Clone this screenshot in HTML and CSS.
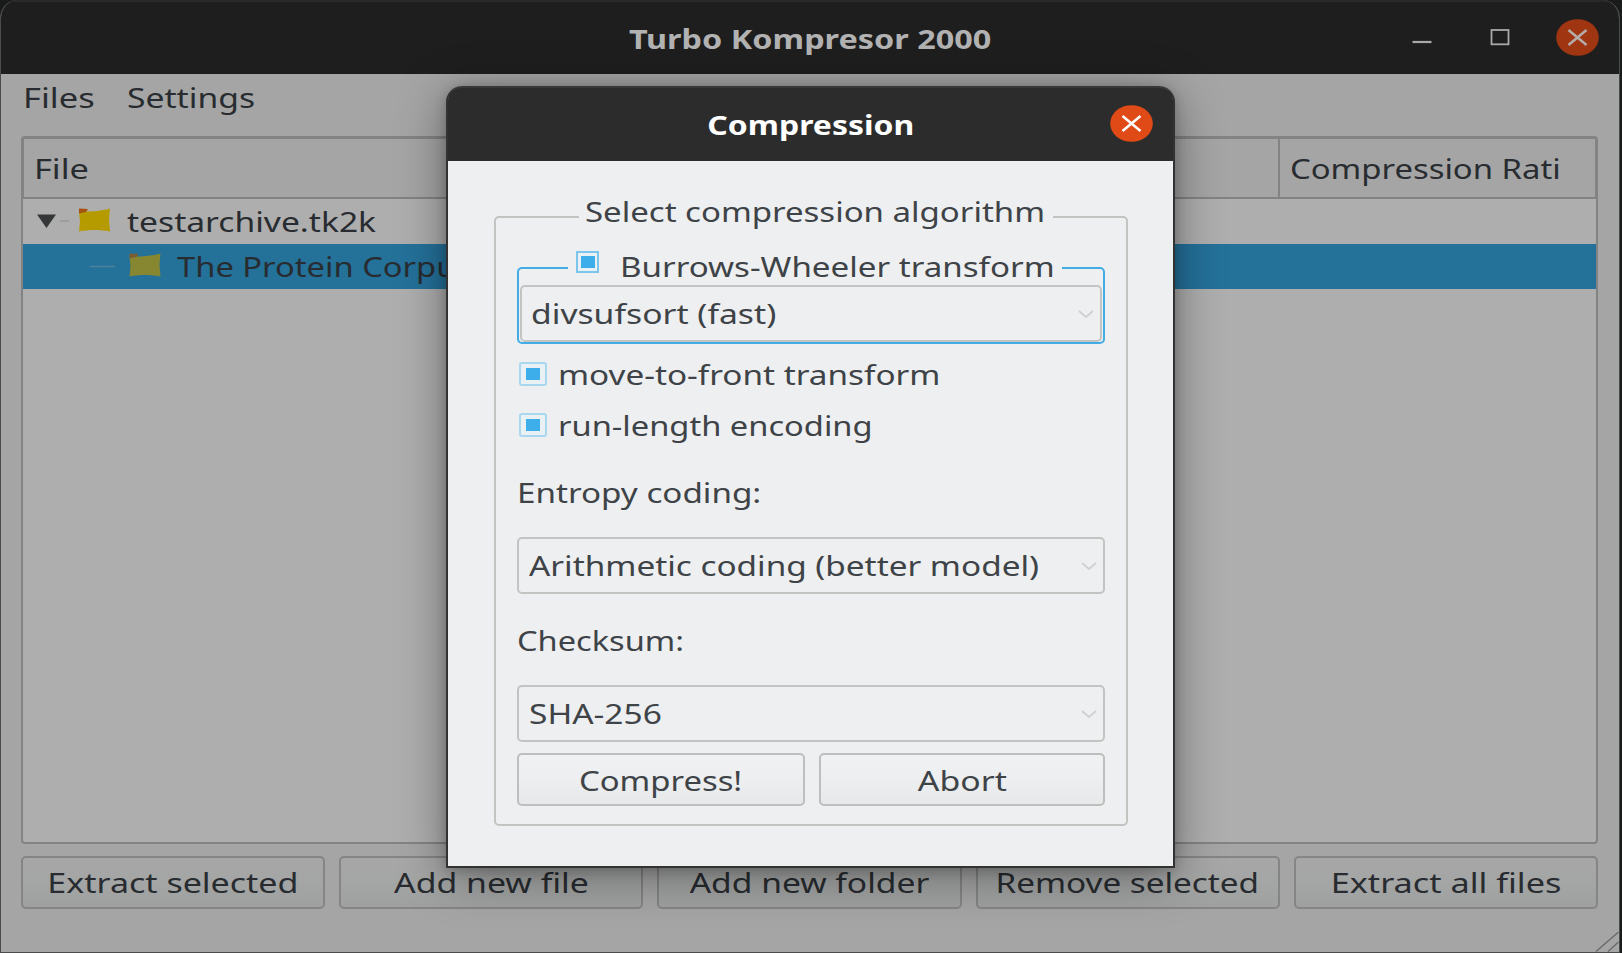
FILE: index.html
```html
<!DOCTYPE html>
<html lang="en">
<head>
<meta charset="utf-8">
<title>Turbo Kompresor 2000</title>
<link rel="stylesheet" href="styles.css">
</head>
<body>
<div class="window">
  <header class="titlebar">
    <h1 class="title"><span class="t t-main">Turbo Kompresor 2000</span></h1>
    <div class="controls">
      <svg class="ctl" width="20" height="38" viewBox="0 0 20 38"><path d="M.5 24h19" stroke="#a9a9a9" stroke-width="2.2"/></svg>
      <svg class="ctl" width="20" height="38" viewBox="0 0 20 38"><rect x="1.5" y="12" width="17" height="14.3" fill="none" stroke="#a9a9a9" stroke-width="1.8"/></svg>
      <svg class="close" width="43" height="37" viewBox="0 0 43 37"><ellipse cx="21.5" cy="18.5" rx="21.3" ry="18.3" fill="#9f3511"/><path d="M12.5 11l18 15M30.5 11l-18 15" stroke="#b5aba8" stroke-width="2.5"/></svg>
    </div>
  </header>
  <nav class="menubar">
    <span class="t t-files">Files</span>
    <span class="t t-settings">Settings</span>
  </nav>
  <main class="content">
    <section class="tree">
      <div class="tree-head">
        <div class="th th-file"><span class="t t-file">File</span></div>
        <div class="th th-ratio"><span class="t t-ratio">Compression Rati</span></div>
      </div>
      <div class="row">
        <svg class="branch" width="104" height="45" viewBox="0 0 104 45"><path d="M14 15.500h19l-9.500 13.500z" fill="#343637"/><path d="M37 22h9" stroke="#979797" stroke-width="1.5"/><path d="M56 12.500c9 0 18 .5 31-3l-1 11 1 12c-10-2-21-2-31 0l1-10z" fill="#b59a00"/><path d="M56 9.500l9 .5-2 3-7 1.500z" fill="#a65311"/></svg>
        <span class="t t-archive">testarchive.tk2k</span>
      </div>
      <div class="row selected">
        <svg class="branch" width="154" height="45" viewBox="0 0 154 45"><path d="M67 22.5h25" stroke="#4a8198" stroke-width="1.5"/><path d="M106.500 12.500c9 0 18 .5 31-3l-1 11 1 12c-10-2-21-2-31 0l1-10z" fill="#868730"/><path d="M106.500 9.500l9 .5-2 3-7 1.500z" fill="#7d5f33"/></svg>
        <span class="t t-corpus">The Protein Corpus</span>
      </div>
    </section>
    <div class="actions">
      <button class="btn dim"><span class="t t-b1">Extract selected</span></button>
      <button class="btn dim"><span class="t t-b2">Add new file</span></button>
      <button class="btn dim"><span class="t t-b3">Add new folder</span></button>
      <button class="btn dim"><span class="t t-b4">Remove selected</span></button>
      <button class="btn dim"><span class="t t-b5">Extract all files</span></button>
    </div>
  </main>
  <svg class="grip" width="24" height="20" viewBox="0 0 24 20"><path d="M1 19.5L23.5 0M13 19.5L23.5 10" stroke="#686868" stroke-width="1.3"/></svg>
</div>

<div class="dialog" role="dialog">
  <header class="dialog-bar">
    <h2 class="title"><span class="t t-dialog">Compression</span></h2>
    <svg class="close" width="43" height="37" viewBox="0 0 43 37"><ellipse cx="21.5" cy="18.5" rx="21.3" ry="18.3" fill="#e04a17"/><path d="M12.5 11l18 15M30.5 11l-18 15" stroke="#fff" stroke-width="2.5"/></svg>
  </header>
  <div class="dialog-body">
    <div class="group">
      <div class="legend legend-outer"><span class="t t-select">Select compression algorithm</span></div>
      <div class="bwt">
        <div class="legend legend-inner"><i class="check small"></i><span class="t t-bwt">Burrows-Wheeler transform</span></div>
        <div class="combo nested"><span class="t t-div">divsufsort (fast)</span><svg class="chev" width="16" height="9" viewBox="0 0 16 9"><path d="M1 1l7 6 7-6"/></svg></div>
      </div>
      <label class="option"><i class="check"></i><span class="t t-mtf">move-to-front transform</span></label>
      <label class="option"><i class="check"></i><span class="t t-rle">run-length encoding</span></label>
      <div class="label label-entropy"><span class="t t-entropy">Entropy coding:</span></div>
      <div class="combo"><span class="t t-arith">Arithmetic coding (better model)</span><svg class="chev" width="16" height="9" viewBox="0 0 16 9"><path d="M1 1l7 6 7-6"/></svg></div>
      <div class="label label-sum"><span class="t t-sum">Checksum:</span></div>
      <div class="combo"><span class="t t-sha">SHA-256</span><svg class="chev" width="16" height="9" viewBox="0 0 16 9"><path d="M1 1l7 6 7-6"/></svg></div>
      <div class="buttons">
        <button class="btn"><span class="t t-compress">Compress!</span></button>
        <button class="btn"><span class="t t-abort">Abort</span></button>
      </div>
    </div>
  </div>
</div>
</body>
</html>
```

FILE: styles.css
```css
* { box-sizing: border-box; }

html, body {
  margin: 0;
  width: 1622px;
  height: 953px;
  overflow: hidden;
}

body {
  position: relative;
  background: #181b19;
  color: #282c30;
  font-family: "Noto Sans", "Open Sans", sans-serif;
  font-size: 27.6px;
  line-height: 30px;
}

/* Window text is set slightly expanded. */
.t {
  display: inline-block;
  white-space: pre;
  transform: scaleX(1.2);
  transform-origin: 0 50%;
}

.title .t, .btn .t { transform-origin: 50% 50%; }

.t-main { transform: scaleX(1.223); }
.t-dialog { transform: scaleX(1.206); }
.t-files { width: 104px; transform: scaleX(1.25); }
.t-settings { transform: scaleX(1.22); }
.t-file { transform: scaleX(1.245); }
.t-ratio { transform: scaleX(1.19); }
.t-archive { transform: scaleX(1.217); }
.t-corpus { transform: scaleX(1.185); }
.t-b1 { transform: scaleX(1.232); }
.t-b2 { transform: scaleX(1.225); }
.t-b3 { transform: scaleX(1.217); }
.t-b4 { transform: scaleX(1.205); }
.t-b5 { transform: scaleX(1.24); }
.t-select { transform: scaleX(1.195); }
.t-div { transform: scaleX(1.22); }
.t-mtf { transform: scaleX(1.206); }
.t-rle { transform: scaleX(1.183); }
.t-entropy { transform: scaleX(1.203); }
.t-arith { transform: scaleX(1.207); }
.t-sum { transform: scaleX(1.18); }
.t-sha { transform: scaleX(1.213); }
.t-compress { transform: scaleX(1.19); }
.t-abort { transform: scaleX(1.225); }

.window {
  position: relative;
  display: flex;
  flex-direction: column;
  width: 1620px;
  height: 953px;
  border: 1px solid #4b4b4b;
  border-top: 0;
  border-radius: 18px 18px 0 0;
  background: #a5a5a5;
  overflow: hidden;
}

.titlebar {
  display: flex;
  flex: none;
  align-items: center;
  justify-content: center;
  height: 74px;
  background: #1e1e1e;
  border-top: 2px solid #292929;
  color: #b2b2b2;
}

.title {
  margin: 1px 0 0;
  font-size: 26.5px;
  font-weight: 700;
  line-height: 30px;
}

.controls {
  position: absolute;
  right: 20px;
  top: 18px;
  display: flex;
  align-items: center;
}

.ctl { margin-right: 58px; }
.ctl:nth-child(2) { margin-right: 46px; }
.close { display: block; }

.menubar {
  display: flex;
  flex: none;
  height: 62px;
  padding: 8px 0 0 22px;
}

.content {
  display: flex;
  flex-direction: column;
  gap: 12px;
  padding: 0 21px 0 20px;
}

.tree {
  height: 708px;
  border: 2px solid #838383;
  border-radius: 4px;
  background: #aeaeae;
}

.tree-head {
  display: flex;
  height: 61px;
  background: #a5a5a5;
  border: 1px solid #838383;
  border-bottom-width: 2px;
}

.th {
  display: flex;
  align-items: center;
  padding-left: 10px;
  padding-bottom: 1px;
}

.th-file { width: 1256px; border-right: 2px solid #838383; }

.row {
  display: flex;
  align-items: center;
  height: 45px;
}

.row .t { margin-top: -2px; }
.row.selected { background: #24719a; }

.branch { flex: none; }

.actions {
  display: grid;
  grid-template-columns: repeat(5, 1fr);
  gap: 14px;
}

.btn {
  display: flex;
  align-items: center;
  justify-content: center;
  height: 53px;
  padding: 0;
  border: 2px solid #bebebd;
  border-radius: 5px;
  background: linear-gradient(#f0f1f2, #eeeff0 45%, #e7e8e9);
  color: inherit;
  font: inherit;
}

.btn.dim {
  padding-bottom: 2px;
  border-color: #858585;
  background: linear-gradient(#a7a7a7, #a4a5a5 50%, #9fa1a0);
}

.grip {
  position: absolute;
  right: 0;
  bottom: 0;
}

.dialog {
  position: absolute;
  left: 446px;
  top: 86px;
  width: 729px;
  height: 782px;
  border: 2px solid #323232;
  border-top: 0;
  border-radius: 16px 16px 0 0;
  background: #eeeff1;
  color: #3e4347;
  box-shadow: 0 8px 48px rgba(0, 0, 0, .4), 0 2px 12px rgba(0, 0, 0, .2);
}

.dialog-bar {
  position: relative;
  display: flex;
  align-items: center;
  justify-content: center;
  height: 75px;
  border-top: 2px solid #383838;
  border-radius: 14px 14px 0 0;
  background: #2c2c2c;
  color: #fff;
}

.dialog-bar .title { margin-top: 0; }

.dialog-bar .close {
  position: absolute;
  right: 20px;
  top: 17px;
}

.dialog-body { padding: 55px 45px 0 46px; }

.group {
  position: relative;
  height: 610px;
  padding: 49px 21px 0;
  border: 2px solid #c3c3c2;
  border-radius: 5px;
}

.legend {
  position: absolute;
  display: flex;
  height: 30px;
  background: #eeeff1;
}

.legend-outer {
  left: 83px;
  top: -22px;
  width: 474px;
  padding-left: 6px;
}

.bwt {
  position: relative;
  height: 77px;
  padding: 16px 0 0 1px;
  border: 2px solid #42ade4;
  border-radius: 5px;
}

.legend-inner {
  left: 49px;
  top: -18px;
  width: 494px;
  height: 32px;
  padding-left: 8px;
}

.legend-inner .t { margin-left: 21px; }

.check {
  flex: none;
  width: 28px;
  height: 24px;
  border: 2px solid #a9d7f0;
  border-radius: 3px;
  background: linear-gradient(#3daee9, #3daee9) 50% 50% / 14px 12px no-repeat, #e9f1f5;
}

.check.small {
  width: 23px;
  height: 22px;
  border-radius: 0;
  border-color: #7cc5ec;
}

.combo {
  display: flex;
  align-items: center;
  justify-content: space-between;
  height: 57px;
  padding: 0 6px 0 10px;
  border: 2px solid #c3c3c2;
  border-radius: 5px;
}

.combo .t { margin-top: -1px; }
.combo.nested { width: 582px; padding-left: 9px; }

.chev {
  margin-top: 1px;
  fill: none;
  stroke: #cfd0d1;
  stroke-width: 1.8;
}

.option {
  display: flex;
  height: 30px;
  margin-top: 15px;
  padding-left: 2px;
}

.option + .option { margin-top: 21px; }
.option .check { margin: 3px 11px 0 0; }

.label { height: 30px; }
.label-entropy { margin: 37px 0 30px; }
.label-sum { margin: 31px 0 30px; }

.buttons {
  display: grid;
  grid-template-columns: 288px 1fr;
  gap: 14px;
  margin-top: 11px;
}
```
